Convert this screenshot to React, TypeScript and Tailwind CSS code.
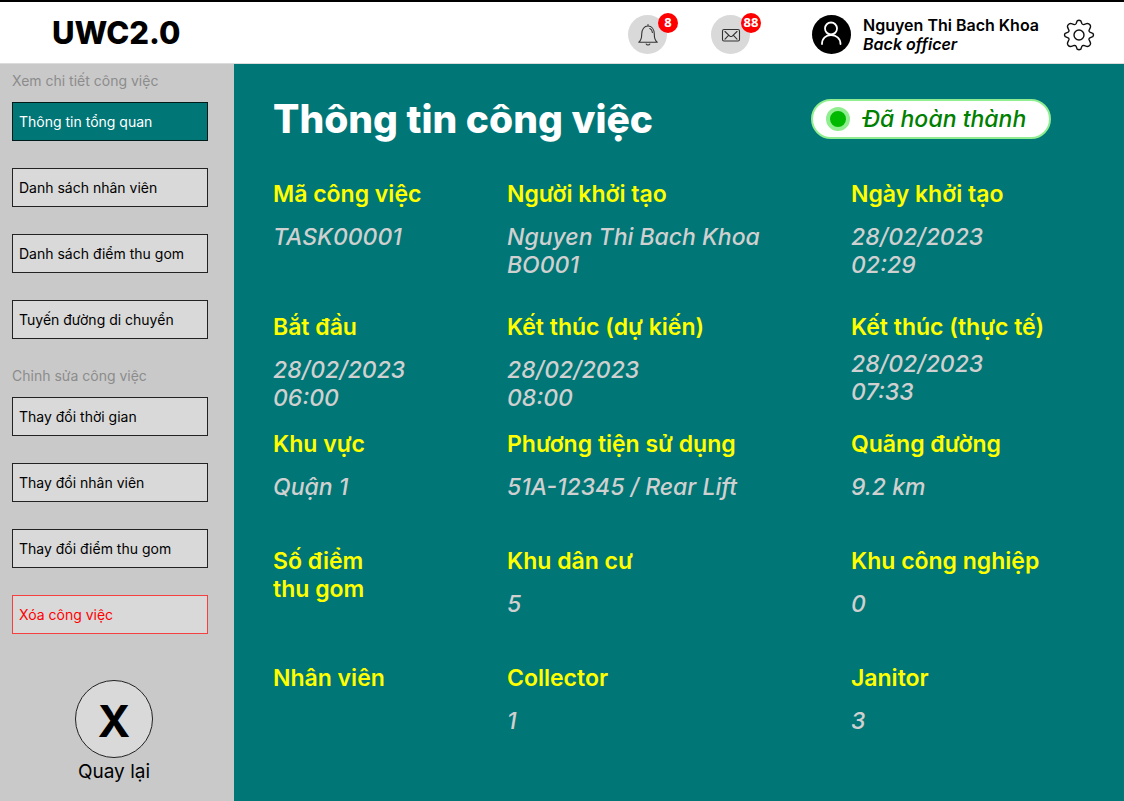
import React from "react";

type NavItem = { label: string; tone?: "active" | "danger" };
type Field = { label: string; value?: string; compact?: boolean };

const detailItems: NavItem[] = [
  { label: "Thông tin tổng quan", tone: "active" },
  { label: "Danh sách nhân viên" },
  { label: "Danh sách điểm thu gom" },
  { label: "Tuyến đường di chuyển" },
];

const editItems: NavItem[] = [
  { label: "Thay đổi thời gian" },
  { label: "Thay đổi nhân viên" },
  { label: "Thay đổi điểm thu gom" },
  { label: "Xóa công việc", tone: "danger" },
];

const rows: Field[][] = [
  [
    { label: "Mã công việc", value: "TASK00001" },
    { label: "Người khởi tạo", value: "Nguyen Thi Bach Khoa\nBO001" },
    { label: "Ngày khởi tạo", value: "28/02/2023\n02:29" },
  ],
  [
    { label: "Bắt đầu", value: "28/02/2023\n06:00" },
    { label: "Kết thúc (dự kiến)", value: "28/02/2023\n08:00" },
    { label: "Kết thúc (thực tế)", value: "28/02/2023\n07:33", compact: true },
  ],
  [
    { label: "Khu vực", value: "Quận 1" },
    { label: "Phương tiện sử dụng", value: "51A-12345 / Rear Lift" },
    { label: "Quãng đường", value: "9.2 km" },
  ],
  [
    { label: "Số điểm\nthu gom" },
    { label: "Khu dân cư", value: "5" },
    { label: "Khu công nghiệp", value: "0" },
  ],
  [
    { label: "Nhân viên" },
    { label: "Collector", value: "1" },
    { label: "Janitor", value: "3" },
  ],
];

const toneClass = {
  default: "border-[#222] bg-[#d9d9d9] text-black",
  active: "border-[#001a1a] bg-[#007676] text-white",
  danger: "border-[#f44040] bg-[#d9d9d9] text-[#ff0000]",
};

function NavGroup({ title, items }: { title: string; items: NavItem[] }) {
  return (
    <section>
      <h2 className="text-[14px] leading-[18px] text-[#8c8c8c]">{title}</h2>
      <ul className="mt-3 flex flex-col gap-[27px]">
        {items.map((item) => (
          <li key={item.label}>
            <button
              type="button"
              className={`block h-[39px] w-full border pl-[6px] text-left text-[14px] ${toneClass[item.tone ?? "default"]}`}
            >
              {item.label}
            </button>
          </li>
        ))}
      </ul>
    </section>
  );
}

function Badge({ children }: { children: string }) {
  return (
    <span className="absolute -top-[2px] left-[30px] flex size-5 items-center justify-center rounded-full bg-[#ff0000] font-['Open_Sans'] text-[13px] font-bold text-white">
      {children}
    </span>
  );
}

function BellIcon() {
  return (
    <svg viewBox="0 0 24 24" className="size-6" fill="none" stroke="#333" strokeWidth="1.1" strokeLinejoin="round" strokeLinecap="round">
      <path d="M12 1.500v1.500M2.800 19.300c2.400-1.800 2.900-4 2.900-8 0-5 2.600-8.300 6.300-8.300s6.300 3.300 6.300 8.300c0 4 .5 6.200 2.900 8z" />
      <path d="M13.800 5.500c1.700.7 2.500 2.200 2.600 4M10.200 21c.7 1.300 2.900 1.300 3.600 0" />
    </svg>
  );
}

function MailIcon() {
  return (
    <svg viewBox="0 0 20 14" className="h-[14px] w-5" fill="none" stroke="#333" strokeWidth="1.1" strokeLinejoin="round" strokeLinecap="round">
      <rect x="1.500" y="1.500" width="17" height="11.500" rx="1.500" />
      <path d="M4 3.500l4.500 4.300q1.500 1.400 3 0L16 3.500M4 11.200l3.800-4M16 11.200l-3.800-4" />
    </svg>
  );
}

function UserIcon() {
  return (
    <svg viewBox="0 0 39 39" className="size-[39px]" fill="none" stroke="#fff" strokeWidth="1.800" strokeLinecap="round">
      <circle cx="19.500" cy="19.500" r="19.500" fill="#000" stroke="none" />
      <circle cx="19" cy="13.500" r="6" />
      <path d="M10 29c0-5.700 4-9 9-9s9.500 3.300 9.500 9" />
    </svg>
  );
}

function GearIcon() {
  return (
    <svg viewBox="0 0 32 32" className="size-8" fill="none" stroke="#111" strokeWidth="1.400" strokeLinejoin="round">
      <circle cx="16" cy="16" r="5" />
      <path d="M14.200 1.800q1.800-1.200 3.600 0l1 2.700q.6 1.200 1.900 1.100l2.900-1q2-.5 3.300 1.200.9 1.200.5 2.600l-1.300 2.800q-.4 1.200.8 1.900l2.800 1.200q1.500 1.700 0 3.400l-2.800 1.200q-1.200.7-.8 1.900l1.300 2.800q.4 1.400-.5 2.600-1.300 1.700-3.300 1.200l-2.900-1q-1.300-.1-1.900 1.100l-1 2.700q-1.800 1.200-3.600 0l-1-2.700q-.6-1.200-1.900-1.100l-2.900 1q-2 .5-3.300-1.200-.9-1.200-.5-2.600l1.300-2.800q.4-1.200-.8-1.900l-2.800-1.200q-1.500-1.700 0-3.400l2.800-1.200q1.200-.7.800-1.900l-1.300-2.800q-.4-1.400.5-2.600 1.300-1.700 3.300-1.200l2.900 1q1.300.1 1.900-1.100z" />
    </svg>
  );
}

export default function App() {
  return (
    <div className="flex min-h-screen flex-col bg-white font-['Inter',sans-serif] text-black">
      <header className="flex h-16 items-center border-t-2 border-b border-t-black border-b-[#dcdcdc] pr-[29px] pl-[52px]">
        <h1 className="text-[31px] leading-10 font-extrabold">UWC2.0</h1>
        <div className="ml-auto flex items-center pt-1">
          <button type="button" aria-label="Notifications" className="relative mr-11 flex size-[39px] items-center justify-center rounded-full bg-[#d9d9d9]">
            <BellIcon />
            <Badge>8</Badge>
          </button>
          <button type="button" aria-label="Messages" className="relative mr-[62px] flex size-[39px] items-center justify-center rounded-full bg-[#d9d9d9]">
            <MailIcon />
            <Badge>88</Badge>
          </button>
          <UserIcon />
          <div className="mr-6 ml-3 text-[16px] leading-[19px] font-semibold">
            <p>Nguyen Thi Bach Khoa</p>
            <p className="italic">Back officer</p>
          </div>
          <button type="button" aria-label="Settings">
            <GearIcon />
          </button>
        </div>
      </header>

      <div className="flex flex-1">
        <nav className="flex w-[234px] shrink-0 flex-col bg-[#c9c9c9] pt-2 pr-[26px] pb-2 pl-3">
          <div className="flex flex-col gap-7">
            <NavGroup title="Xem chi tiết công việc" items={detailItems} />
            <NavGroup title="Chỉnh sửa công việc" items={editItems} />
          </div>
          <button type="button" className="mt-[46px] ml-2 flex flex-col items-center self-center">
            <span className="flex size-[78px] items-center justify-center rounded-full border border-[#222] bg-[#d9d9d9] pt-1 text-[44px] font-bold">
              X
            </span>
            <span className="text-[19px] leading-7">Quay lại</span>
          </button>
        </nav>

        <main className="min-w-0 flex-1 bg-[#007676] px-[39px] pt-[34px] pb-8">
          <div className="flex items-center justify-between pr-[34px]">
            <h2 className="text-[39px] leading-[42px] font-extrabold text-white">Thông tin công việc</h2>
            <p className="flex h-10 w-[240px] items-center gap-[13px] rounded-full border-2 border-[#90ee90] bg-white pl-[13px] text-[23px] font-medium text-[#008000] italic">
              <span className="size-6 rounded-full border-4 border-[#90ee90] bg-[#00b900]" />
              Đã hoàn thành
            </p>
          </div>

          <dl className="mt-10 flex flex-col gap-[18px] text-[23px] leading-7">
            {rows.map((row, i) => (
              <div
                key={row[0].label}
                className={`grid min-h-[99px] grid-cols-[234fr_344fr_234fr] ${i === 0 ? "pb-4" : ""}`}
              >
                {row.map((field) => (
                  <div
                    key={field.label}
                    className={`flex flex-col whitespace-pre ${field.compact ? "gap-[9px]" : "gap-[15px]"}`}
                  >
                    <dt className="font-semibold text-[#ffff00]">{field.label}</dt>
                    {field.value && <dd className="font-medium text-[#d0d0d0] italic">{field.value}</dd>}
                  </div>
                ))}
              </div>
            ))}
          </dl>
        </main>
      </div>
    </div>
  );
}
